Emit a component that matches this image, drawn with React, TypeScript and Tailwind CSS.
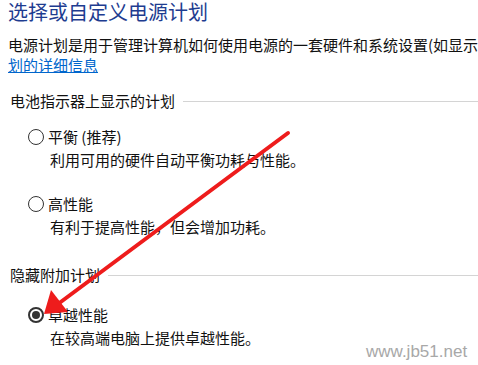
import React from "react";

function Radio({ checked = false }: { checked?: boolean }) {
  return (
    <span
      className={`flex h-[16px] w-[16px] shrink-0 items-center justify-center rounded-full border-[#333333] bg-white ${
        checked ? "border-[2px]" : "border"
      }`}
    >
      {checked && <span className="h-[8px] w-[8px] rounded-full bg-[#333333]" />}
    </span>
  );
}

function GroupHeader({ label }: { label: string }) {
  return (
    <div className="flex items-center gap-2 pl-[2px] text-[15px] leading-[20px] text-[#111111]">
      <span className="shrink-0">{label}</span>
      <div className="h-px flex-1 bg-[#d4d4d4]" />
    </div>
  );
}

function PlanOption({
  label,
  desc,
  checked,
}: {
  label: string;
  desc: string;
  checked?: boolean;
}) {
  return (
    <div className="pl-[20px]">
      <label className="flex items-center gap-[4px] text-[15px] leading-[20px] text-[#111111]">
        <Radio checked={checked} />
        <span>{label}</span>
      </label>
      <p className="mt-[3px] pl-[22px] text-[15px] leading-[20px] text-[#111111]">{desc}</p>
    </div>
  );
}

export default function App() {
  return (
    <div className="relative h-[365px] w-[478px] overflow-hidden bg-white font-['Noto_Sans_CJK_SC','Noto_Sans',sans-serif]">
      <div className="pl-[8px]">
        <h1 className="text-[20px] leading-[24px] text-[#1e3c90]">选择或自定义电源计划</h1>

        <p className="mt-[11px] overflow-hidden whitespace-nowrap text-[15px] leading-[20px] text-[#111111]">
          电源计划是用于管理计算机如何使用电源的一套硬件和系统设置(如显示器亮度、睡眠等)。
        </p>
        <a href="#" className="block text-[15px] leading-[20px] text-[#0066cc] underline">
          划的详细信息
        </a>

        <div className="mt-[16px]">
          <GroupHeader label="电池指示器上显示的计划" />
        </div>

        <div className="mt-[16px]">
          <PlanOption label="平衡 (推荐)" desc="利用可用的硬件自动平衡功耗与性能。" />
        </div>
        <div className="mt-[24px]">
          <PlanOption label="高性能" desc="有利于提高性能，但会增加功耗。" />
        </div>

        <div className="mt-[28px]">
          <GroupHeader label="隐藏附加计划" />
        </div>

        <div className="mt-[20px]">
          <PlanOption checked label="卓越性能" desc="在较高端电脑上提供卓越性能。" />
        </div>
      </div>

      {/* red annotation arrow */}
      <svg className="pointer-events-none absolute left-0 top-0" width="478" height="365" viewBox="0 0 478 365">
        <line x1="288" y1="133" x2="58" y2="304" stroke="#ee1c1c" strokeWidth="4" strokeLinecap="round" />
        <polygon points="44,314 51,290 68,312" fill="#ee1c1c" />
      </svg>

      <span className="absolute left-[366px] top-[342px] font-['Liberation_Sans',sans-serif] text-[17px] leading-[20px] text-[#a8a8a8]">
        www.jb51.net
      </span>
    </div>
  );
}
